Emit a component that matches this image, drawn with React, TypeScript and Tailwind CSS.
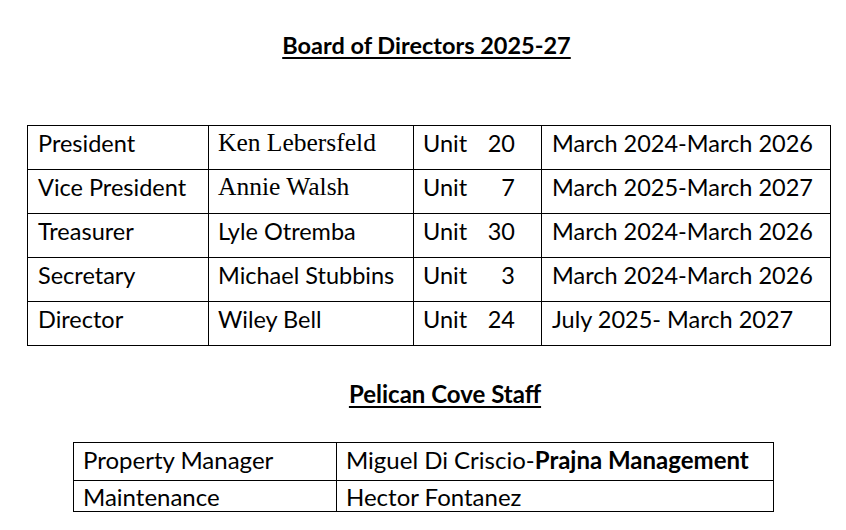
const sans = { fontFamily: "Lato, 'Liberation Sans', sans-serif" };

const board = [
  { role: "President", name: "Ken Lebersfeld", serif: true, unit: "20", term: "March 2024-March 2026" },
  { role: "Vice President", name: "Annie Walsh", serif: true, unit: "7", term: "March 2025-March 2027" },
  { role: "Treasurer", name: "Lyle Otremba", serif: false, unit: "30", term: "March 2024-March 2026" },
  { role: "Secretary", name: "Michael Stubbins", serif: false, unit: "3", term: "March 2024-March 2026" },
  { role: "Director", name: "Wiley Bell", serif: false, unit: "24", term: "July 2025- March 2027" },
];

export default function App() {
  return (
    <div
      className="w-[846px] h-[530px] bg-white text-black overflow-hidden font-['Lato','Liberation_Sans',sans-serif]"
      style={sans}
    >
      {/* Heading */}
      <div className="pt-[31px] pl-[7px] text-center">
        <span className="text-[23.5px] leading-[28px] font-bold underline underline-offset-[3px] decoration-[1.5px]">
          Board of Directors 2025-27
        </span>
      </div>

      {/* Board table */}
      <table className="ml-[27px] mt-[65px] border-collapse table-fixed text-[23.5px] leading-[28px]">
        <colgroup>
          <col className="w-[181px]" />
          <col className="w-[205px]" />
          <col className="w-[128px]" />
          <col className="w-[289px]" />
        </colgroup>
        <tbody>
          {board.map((r) => (
            <tr key={r.role} className="h-[44px]">
              <td className="border border-black align-top pt-[3px] pl-[10px] whitespace-nowrap">{r.role}</td>
              <td
                className={
                  r.serif
                    ? "border border-black align-top pt-[3px] pl-[9px] whitespace-nowrap font-['Liberation_Serif',serif] text-[25.5px]"
                    : "border border-black align-top pt-[3px] pl-[9px] whitespace-nowrap"
                }
              >
                {r.name}
              </td>
              <td className="border border-black align-top pt-[3px] pl-[9px] pr-[26px]">
                <div className="flex justify-between">
                  <span>Unit</span>
                  <span>{r.unit}</span>
                </div>
              </td>
              <td className="border border-black align-top pt-[3px] pl-[10px] whitespace-nowrap">{r.term}</td>
            </tr>
          ))}
        </tbody>
      </table>

      {/* Staff heading */}
      <div className="mt-[34px] pl-[44px] text-center">
        <span className="text-[24px] leading-[28px] font-bold underline underline-offset-[3px] decoration-[1.5px]">
          Pelican Cove Staff
        </span>
      </div>

      {/* Staff table */}
      <table className="ml-[73px] mt-[33px] border-collapse table-fixed text-[24px] leading-[28px]">
        <colgroup>
          <col className="w-[263px]" />
          <col className="w-[437px]" />
        </colgroup>
        <tbody>
          <tr className="h-[38px]">
            <td className="border border-black align-top pt-[3px] pl-[9px] whitespace-nowrap">Property Manager</td>
            <td className="border border-black align-top pt-[3px] pl-[9px] whitespace-nowrap">
              Miguel Di Criscio-<span className="font-bold">Prajna Management</span>
            </td>
          </tr>
          <tr className="h-[31px]">
            <td className="border border-black align-top pt-[2px] pl-[9px] whitespace-nowrap">Maintenance</td>
            <td className="border border-black align-top pt-[2px] pl-[9px] whitespace-nowrap">Hector Fontanez</td>
          </tr>
        </tbody>
      </table>
    </div>
  );
}
